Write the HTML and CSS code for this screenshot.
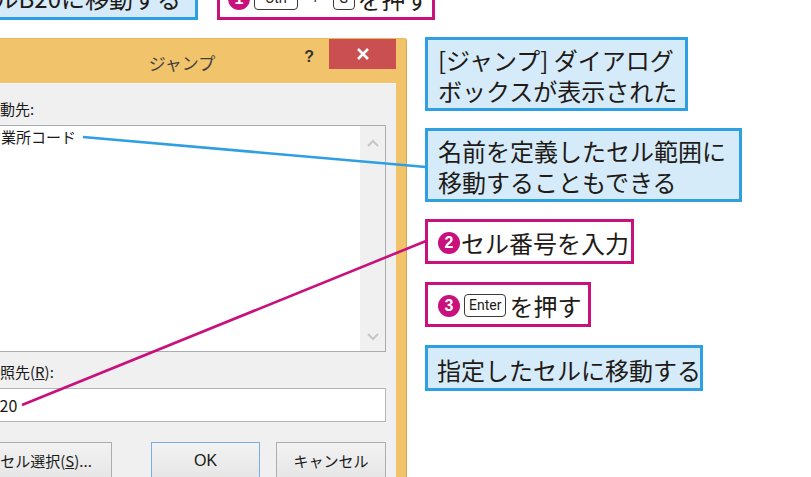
FILE: index.html
```html
<!DOCTYPE html>
<html lang="ja">
<head>
    <meta charset="UTF-8">
    <title>ジャンプ ダイアログ</title>
    <link rel="stylesheet" href="styles.css">
</head>
<body>
    <div class="canvas">
        <!-- the Jump dialog, cropped by the frame -->
        <div class="dialog">
            <div class="titlebar">
                <span class="title">ジャンプ</span>
                <div class="caption-buttons">
                    <span class="help">?</span>
                    <span class="close">
                        <svg width="14" height="14" viewBox="0 0 14 14"><path d="M2 2 L12 12 M12 2 L2 12" stroke="#fff" stroke-width="2.6"/></svg>
                    </span>
                </div>
            </div>
            <div class="dialog-body">
                <div class="field-label">移動先:</div>
                <div class="listbox">
                    <div class="list-items">
                        <div class="list-item">営業所コード</div>
                    </div>
                    <div class="scrollbar">
                        <svg width="12" height="8" viewBox="0 0 12 8"><path d="M1 7 L6 2 L11 7" fill="none" stroke="#c6c6c6" stroke-width="2"/></svg>
                        <svg width="12" height="8" viewBox="0 0 12 8"><path d="M1 1 L6 6 L11 1" fill="none" stroke="#c6c6c6" stroke-width="2"/></svg>
                    </div>
                </div>
                <div class="field-label second">参照先(<u>R</u>):</div>
                <div class="textbox">B20</div>
                <div class="buttons">
                    <div class="btn btn-select">セル選択(<u>S</u>)...</div>
                    <div class="btn btn-default">OK</div>
                    <div class="btn">キャンセル</div>
                </div>
            </div>
        </div>

        <!-- leader lines -->
        <svg class="leaders" width="811" height="477" viewBox="0 0 811 477">
            <line x1="83" y1="137" x2="426" y2="167" stroke="#2e9fe0" stroke-width="2.6"/>
            <line x1="22" y1="405" x2="426" y2="241" stroke="#c8117d" stroke-width="2.6"/>
        </svg>

        <!-- callouts -->
        <div class="callout blue top-a">セルB20に移動する</div>
        <div class="callout pink top-b">
            <span class="num">1</span><span class="key key-ctrl">Ctrl</span><span class="plus">+</span><span class="key key-g">G</span>を押す
        </div>
        <div class="callout blue c1">[ジャンプ] ダイアログ<br>ボックスが表示された</div>
        <div class="callout blue c2">名前を定義したセル範囲に<br>移動することもできる</div>
        <div class="callout pink c3"><span class="num">2</span>セル番号を入力</div>
        <div class="callout pink c4"><span class="num">3</span><span class="key">Enter</span>を押す</div>
        <div class="callout blue c5">指定したセルに移動する</div>
    </div>
</body>
</html>
```
FILE: styles.css
```css
/* page frame */
body {
    margin: 0;
    background-color: #fff;
    font-family: "Noto Sans CJK JP", "Noto Sans", sans-serif;
}
.canvas {
    position: relative;
    width: 811px;
    height: 477px;
    overflow: hidden;
    background-color: #fff;
}

/* dialog */
.dialog {
    position: absolute;
    left: -43px;
    top: 38px;
    width: 450px;
    box-sizing: border-box;
    padding: 0 10px 0 11px;
    background-color: #f1c46b;
    border-right: 1px solid #d6a64c;
    border-top: 1px solid #e7b95f;
    border-top-right-radius: 3px;
}
.titlebar {
    display: grid;
    grid-template-columns: 1fr auto 1fr;
    height: 44px;
}
.title {
    grid-column: 2;
    padding-top: 12px;
    font-size: 17px;
    line-height: 24px;
    color: #3f3f3f;
}
.caption-buttons {
    grid-column: 3;
    justify-self: end;
    display: flex;
    align-items: flex-start;
}
.help {
    margin: 9px 15px 0 0;
    font-family: "Liberation Sans", sans-serif;
    font-weight: bold;
    font-size: 16px;
    color: #333;
}
.close {
    display: flex;
    align-items: center;
    justify-content: center;
    width: 67px;
    height: 30px;
    background-color: #c94f50;
}
.dialog-body {
    height: 420px;
    padding: 15px 10px 0 12px;
    background-color: #f0f0f0;
    border-top: 1px solid #f8f8f8;
    font-size: 15px;
    color: #1a1a1a;
}
.field-label {
    line-height: 20px;
    padding-left: 5px;
}
.field-label.second {
    margin-top: 10px;
}
.listbox {
    display: flex;
    height: 227px;
    margin-top: 6px;
    box-sizing: border-box;
    border: 1px solid #a9acb0;
    background-color: #fff;
}
.list-items {
    flex: 1;
    padding: 1px 5px;
}
.list-item {
    line-height: 20px;
}
.scrollbar {
    width: 25px;
    display: flex;
    flex-direction: column;
    justify-content: space-between;
    align-items: center;
    padding: 13px 0 10px;
    background-color: #f0f0f0;
}
.textbox {
    height: 34px;
    margin-top: 6px;
    box-sizing: border-box;
    border: 1px solid #b4b6ba;
    background-color: #fff;
    padding-left: 8px;
    line-height: 32px;
    font-size: 16px;
}
.buttons {
    display: flex;
    gap: 16px;
    margin-top: 20px;
}
.btn {
    width: 110px;
    height: 38px;
    box-sizing: border-box;
    border: 1px solid #adadad;
    background: linear-gradient(#f2f2f2, #e6e6e6);
    text-align: center;
    line-height: 36px;
}
.btn-select {
    width: 132px;
    margin-right: auto;
}
.btn-default {
    width: 109px;
    border-color: #7aaee2;
    font-family: "Liberation Sans", sans-serif;
    font-size: 16px;
}

/* leader lines */
.leaders {
    position: absolute;
    left: 0;
    top: 0;
}

/* callouts */
.callout {
    position: absolute;
    display: flex;
    align-items: center;
    box-sizing: border-box;
    padding: 2px 6px 0 10px;
    border: 3px solid;
    font-size: 24px;
    line-height: 31px;
    color: #221a16;
    white-space: nowrap;
}
.callout.blue {
    border-color: #2e9fe0;
    background-color: #d5ebf9;
}
.callout.pink {
    border-color: #c8117d;
    background-color: #fff;
}
.top-a {
    left: -60px;
    top: -25px;
    width: 258px;
    height: 45px;
    justify-content: flex-end;
    padding: 0 14px 0 0;
}
.top-b {
    left: 217px;
    top: -25px;
    width: 218px;
    height: 45px;
    padding-left: 8px;
}
.c1 { left: 425px; top: 37px; width: 263px; height: 74px; }
.c2 { left: 425px; top: 128px; width: 317px; height: 74px; }
.c3 { left: 425px; top: 219px; width: 209px; height: 45px; }
.c4 { left: 425px; top: 282px; width: 166px; height: 45px; }
.c5 { left: 425px; top: 345px; width: 278px; height: 46px; padding-left: 9px; }

.num {
    flex-shrink: 0;
    display: inline-flex;
    align-items: center;
    justify-content: center;
    width: 22px;
    height: 22px;
    border-radius: 50%;
    background-color: #c8117d;
    color: #fff;
    font-family: "Liberation Sans", sans-serif;
    font-weight: bold;
    font-size: 16px;
    line-height: 1;
    margin-right: 1px;
}
.key {
    flex-shrink: 0;
    display: inline-block;
    height: 23px;
    box-sizing: border-box;
    padding: 0 4px;
    border: 1px solid #3a3a3a;
    border-radius: 4px;
    font-family: "Roboto", "Liberation Sans", sans-serif;
    font-size: 14px;
    line-height: 21px;
    margin: 0 3px;
    text-align: center;
}
.key-ctrl {
    width: 44px;
}
.key-g {
    width: 22px;
    padding: 0;
}
.plus {
    flex-shrink: 0;
    font-family: "Liberation Sans", sans-serif;
    font-size: 18px;
    color: #333;
    margin: 0 9px;
}
```
